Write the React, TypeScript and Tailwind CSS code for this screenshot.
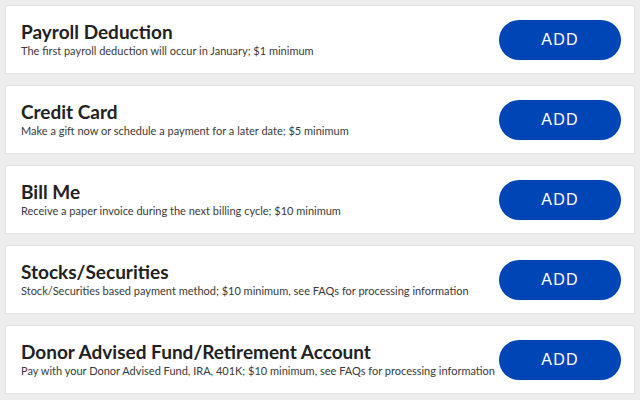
import React from "react"

const options = [
  { title: "Payroll Deduction", text: "The first payroll deduction will occur in January; $1 minimum" },
  { title: "Credit Card", text: "Make a gift now or schedule a payment for a later date; $5 minimum" },
  { title: "Bill Me", text: "Receive a paper invoice during the next billing cycle; $10 minimum" },
  { title: "Stocks/Securities", text: "Stock/Securities based payment method; $10 minimum, see FAQs for processing information" },
  {
    title: "Donor Advised Fund/Retirement Account",
    text: "Pay with your Donor Advised Fund, IRA, 401K; $10 minimum, see FAQs for processing information",
  },
]

export default function App() {
  return (
    <main className="w-[640px] h-[400px] bg-[#ededed] px-[5px] pt-[5px] flex flex-col gap-[11px] font-['Lato',sans-serif]">
      {options.map((o) => (
        <div
          key={o.title}
          className="h-[69px] shrink-0 bg-white border border-[#e2e2e2] flex items-center justify-between pl-[15px] pr-[13px]"
        >
          <div className="flex flex-col">
            <h2 className="text-[19px] leading-[22px] font-bold text-[#222]">{o.title}</h2>
            <p className="text-[11px] leading-[15px] text-[#3a3a3a]">{o.text}</p>
          </div>
          <button className="w-[122px] h-[40px] rounded-full bg-[#0045b5] text-white text-[16px] tracking-[1.2px] font-['Liberation_Sans',sans-serif]">
            ADD
          </button>
        </div>
      ))}
    </main>
  )
}
